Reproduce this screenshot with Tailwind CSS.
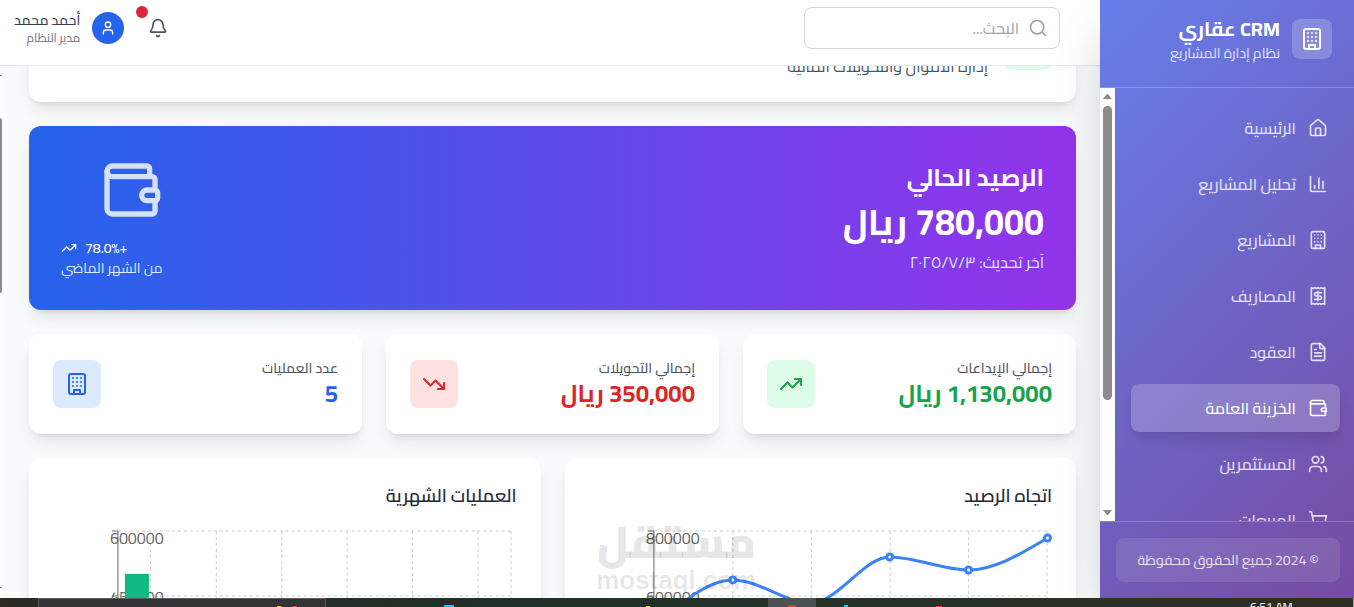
<!DOCTYPE html>
<html lang="ar" dir="rtl">
<head>
  <meta charset="UTF-8">
  <meta name="viewport" content="width=device-width, initial-scale=1.0">
  <title>عقاري CRM | الخزينة العامة</title>
  <script src="https://cdn.jsdelivr.net/npm/@tailwindcss/browser@4"></script>
</head>
<body class="h-screen flex flex-col overflow-hidden bg-[#f9fafb] font-['Cairo','Noto_Sans','DejaVu_Sans',sans-serif]">
  <!-- Shared icons -->
  <svg class="hidden" xmlns="http://www.w3.org/2000/svg">
    <symbol id="building" viewBox="0 0 24 24">
      <rect width="16" height="20" x="4" y="2" rx="2" />
      <path d="M9 22v-4h6v4M8 6h.01M16 6h.01M12 6h.01M12 10h.01M12 14h.01M16 10h.01M16 14h.01M8 10h.01M8 14h.01" />
    </symbol>
    <symbol id="wallet" viewBox="0 0 24 24">
      <path d="M19 7V4a1 1 0 0 0-1-1H5a2 2 0 0 0 0 4h15a1 1 0 0 1 1 1v4h-3a2 2 0 0 0 0 4h3a1 1 0 0 0 1-1v-2a1 1 0 0 0-1-1" />
      <path d="M3 5v14a2 2 0 0 0 2 2h15a1 1 0 0 0 1-1v-4" />
    </symbol>
    <symbol id="trend-up" viewBox="0 0 24 24">
      <path d="M22 7l-8.500 8.500-5-5L2 17M16 7h6v6" />
    </symbol>
    <symbol id="trend-down" viewBox="0 0 24 24">
      <path d="M22 17l-8.500-8.500-5 5L2 7M16 17h6v-6" />
    </symbol>
  </svg>

  <div class="flex-1 min-h-0 flex">
    <!-- Sidebar -->
    <aside class="relative z-20 w-[254px] shrink-0 flex flex-col shadow-2xl bg-[linear-gradient(135deg,#667eea_0%,#764ba2_100%)]">
      <div class="flex items-center gap-3 pt-[15px] pb-6 pr-[22px] pl-6 border-b border-white/20">
        <div class="size-10 flex items-center justify-center rounded-lg bg-white/20 text-white">
          <svg class="size-6 fill-none stroke-current stroke-2" stroke-linecap="round" stroke-linejoin="round"><use href="#building" /></svg>
        </div>
        <div class="whitespace-nowrap">
          <h1 class="text-xl leading-7 font-bold text-white">CRM عقاري</h1>
          <p class="text-sm leading-5 text-white/80">نظام إدارة المشاريع</p>
        </div>
      </div>

      <div class="flex-1 min-h-0 flex overflow-hidden">
        <nav class="flex-1 flex flex-col gap-2 py-4 pr-[14px] pl-4 text-base font-medium whitespace-nowrap text-white/80">
          <a href="#" class="h-12 shrink-0 flex items-center gap-3 px-3 rounded-lg">
            <svg class="size-5 fill-none stroke-current stroke-2" viewBox="0 0 24 24" stroke-linecap="round" stroke-linejoin="round"><path d="M15 21v-8a1 1 0 0 0-1-1h-4a1 1 0 0 0-1 1v8" /><path d="M3 10a2 2 0 0 1 .709-1.528l7-5.999a2 2 0 0 1 2.582 0l7 5.999A2 2 0 0 1 21 10v9a2 2 0 0 1-2 2H5a2 2 0 0 1-2-2z" /></svg>
            <span>الرئيسية</span>
          </a>
          <a href="#" class="h-12 shrink-0 flex items-center gap-3 px-3 rounded-lg">
            <svg class="size-5 fill-none stroke-current stroke-2" viewBox="0 0 24 24" stroke-linecap="round" stroke-linejoin="round"><path d="M3 3v16a2 2 0 0 0 2 2h16M18 17V9M13 17V5M8 17v-3" /></svg>
            <span>تحليل المشاريع</span>
          </a>
          <a href="#" class="h-12 shrink-0 flex items-center gap-3 px-3 rounded-lg">
            <svg class="size-5 fill-none stroke-current stroke-2" stroke-linecap="round" stroke-linejoin="round"><use href="#building" /></svg>
            <span>المشاريع</span>
          </a>
          <a href="#" class="h-12 shrink-0 flex items-center gap-3 px-3 rounded-lg">
            <svg class="size-5 fill-none stroke-current stroke-2" viewBox="0 0 24 24" stroke-linecap="round" stroke-linejoin="round"><path d="M4 2v20l2-1 2 1 2-1 2 1 2-1 2 1 2-1 2 1V2l-2 1-2-1-2 1-2-1-2 1-2-1-2 1Z" /><path d="M16 8h-6a2 2 0 1 0 0 4h4a2 2 0 1 1 0 4H8M12 17.500v-11" /></svg>
            <span>المصاريف</span>
          </a>
          <a href="#" class="h-12 shrink-0 flex items-center gap-3 px-3 rounded-lg">
            <svg class="size-5 fill-none stroke-current stroke-2" viewBox="0 0 24 24" stroke-linecap="round" stroke-linejoin="round"><path d="M15 2H6a2 2 0 0 0-2 2v16a2 2 0 0 0 2 2h12a2 2 0 0 0 2-2V7Z" /><path d="M14 2v4a2 2 0 0 0 2 2h4M10 9H8M16 13H8M16 17H8" /></svg>
            <span>العقود</span>
          </a>
          <a href="#" class="h-12 shrink-0 flex items-center gap-3 px-3 rounded-lg bg-white/20 shadow-lg text-white">
            <svg class="size-5 fill-none stroke-current stroke-2" stroke-linecap="round" stroke-linejoin="round"><use href="#wallet" /></svg>
            <span>الخزينة العامة</span>
          </a>
          <a href="#" class="h-12 shrink-0 flex items-center gap-3 px-3 rounded-lg">
            <svg class="size-5 fill-none stroke-current stroke-2" viewBox="0 0 24 24" stroke-linecap="round" stroke-linejoin="round"><path d="M16 21v-2a4 4 0 0 0-4-4H6a4 4 0 0 0-4 4v2" /><circle cx="9" cy="7" r="4" /><path d="M22 21v-2a4 4 0 0 0-3-3.870M16 3.130a4 4 0 0 1 0 7.750" /></svg>
            <span>المستثمرين</span>
          </a>
          <a href="#" class="h-12 shrink-0 flex items-center gap-3 px-3 rounded-lg">
            <svg class="size-5 fill-none stroke-current stroke-2" viewBox="0 0 24 24" stroke-linecap="round" stroke-linejoin="round"><circle cx="8" cy="21" r="1" /><circle cx="19" cy="21" r="1" /><path d="M2.050 2.050h2l2.660 12.420a2 2 0 0 0 2 1.580h9.780a2 2 0 0 0 1.950-1.570l1.650-7.430H5.120" /></svg>
            <span>المبيعات</span>
          </a>
        </nav>
        <!-- Scrollbar -->
        <div class="w-[15px] shrink-0 flex flex-col items-center pt-1.5 pb-1.5 bg-[#fcfcfc]">
          <svg class="w-[9px] h-[5px] fill-[#8b8b8b]" viewBox="0 0 9 5"><path d="M0 5L4 0h1l4 5z" /></svg>
          <div class="w-[9px] h-[294px] mt-[7px] rounded-full bg-[#8b8b8b]"></div>
          <svg class="w-[9px] h-[5px] mt-auto fill-[#8b8b8b]" viewBox="0 0 9 5"><path d="M0 0h9L5 5H4z" /></svg>
        </div>
      </div>

      <div class="pt-4 pb-4 pr-[14px] pl-4 border-t border-white/20">
        <p class="h-11 flex items-center justify-center rounded-lg bg-white/10 text-sm text-white/80 whitespace-nowrap">© 2024 جميع الحقوق محفوظة</p>
      </div>
    </aside>

    <div class="flex-1 min-w-0 flex flex-col">
      <!-- Header -->
      <header class="relative z-10 flex items-center justify-between pt-[7px] pb-4 pr-10 pl-[14px] bg-white border-b border-[#e5e7eb]">
        <div class="relative">
          <label for="search" class="sr-only">البحث</label>
          <svg class="absolute right-3 top-[11px] size-5 fill-none stroke-[#9ca3af] stroke-2" viewBox="0 0 24 24" stroke-linecap="round"><circle cx="11" cy="11" r="8" /><path d="m21 21-4.300-4.300" /></svg>
          <input type="text" id="search" placeholder="البحث..." class="w-64 h-[42px] pr-10 pl-4 rounded-lg border border-[#d1d5db] text-base placeholder:text-[#9ca3af] focus:outline-none focus:border-blue-500">
        </div>
        <div class="flex items-center gap-4">
          <button type="button" aria-label="الإشعارات" class="relative p-2 text-[#4b5563]">
            <svg class="size-5 fill-none stroke-current stroke-2" viewBox="0 0 24 24" stroke-linecap="round" stroke-linejoin="round"><path d="M10.268 21a2 2 0 0 0 3.464 0" /><path d="M3.262 15.326A1 1 0 0 0 4 17h16a1 1 0 0 0 .740-1.673C19.410 13.956 18 12.499 18 8A6 6 0 0 0 6 8c0 4.499-1.411 5.956-2.738 7.326" /></svg>
            <span class="absolute -top-1 -left-1 size-3 rounded-full bg-[#dc2638]"></span>
          </button>
          <div class="flex items-center gap-3">
            <div class="size-8 flex items-center justify-center rounded-full bg-[#2563eb] text-white">
              <svg class="size-4 fill-none stroke-current stroke-2" viewBox="0 0 24 24" stroke-linecap="round" stroke-linejoin="round"><path d="M19 21v-2a4 4 0 0 0-4-4H9a4 4 0 0 0-4 4v2" /><circle cx="12" cy="7" r="4" /></svg>
            </div>
            <div class="whitespace-nowrap">
              <p class="text-sm leading-5 font-medium text-[#374151]">أحمد محمد</p>
              <p class="text-xs leading-4 text-[#6b7280]">مدير النظام</p>
            </div>
          </div>
        </div>
      </header>

      <div class="flex-1 min-h-0 flex">
        <main class="flex-1 min-w-0 overflow-hidden px-6">
          <div class="-mt-[76px] flex flex-col gap-6">
            <section class="flex items-center gap-4 p-6 rounded-xl bg-white shadow-lg">
              <div class="size-12 flex items-center justify-center rounded-lg bg-[#dcfce7] text-[#16a34a]">
                <svg class="size-6 fill-none stroke-current stroke-2"><use href="#wallet" /></svg>
              </div>
              <div>
                <h2 class="mb-2 text-2xl leading-8 font-bold text-[#111827]">الخزينة العامة</h2>
                <p class="text-base leading-6 text-[#4b5563]">إدارة الأموال والتحويلات المالية</p>
              </div>
            </section>

            <!-- Balance -->
            <section class="flex items-center justify-between p-8 rounded-xl bg-[linear-gradient(to_right,#2563eb,#9333ea)] text-white shadow-lg">
              <div>
                <h3 class="mb-2 text-2xl leading-8 font-bold">الرصيد الحالي</h3>
                <p class="mb-2 text-4xl leading-10 font-bold">780,000 ريال</p>
                <p class="text-base leading-6 text-[#dbeafe]">آخر تحديث: ٣‏/٧‏/٢٠٢٥</p>
              </div>
              <div>
                <svg class="size-16 mb-4 fill-none stroke-[#d5e0fb] stroke-2" stroke-linecap="round" stroke-linejoin="round"><use href="#wallet" /></svg>
                <div class="text-sm leading-5">
                  <div class="flex items-center justify-end gap-2 font-medium">
                    <span dir="ltr">78.0%+</span>
                    <svg class="size-4 fill-none stroke-current stroke-2" stroke-linecap="round" stroke-linejoin="round"><use href="#trend-up" /></svg>
                  </div>
                  <p class="text-[#dbeafe] whitespace-nowrap">من الشهر الماضي</p>
                </div>
              </div>
            </section>

            <!-- Stats -->
            <section class="grid grid-cols-3 gap-6">
              <div class="flex items-center justify-between p-6 rounded-xl bg-white shadow-lg">
                <div>
                  <p class="text-sm leading-5 font-medium text-[#4b5563]">إجمالي الإيداعات</p>
                  <p class="text-2xl leading-8 font-bold text-[#16a34a]">1,130,000 ريال</p>
                </div>
                <div class="p-3 rounded-lg bg-[#dcfce7] text-[#16a34a]">
                  <svg class="size-6 fill-none stroke-current stroke-2" stroke-linecap="round" stroke-linejoin="round"><use href="#trend-up" /></svg>
                </div>
              </div>
              <div class="flex items-center justify-between p-6 rounded-xl bg-white shadow-lg">
                <div>
                  <p class="text-sm leading-5 font-medium text-[#4b5563]">إجمالي التحويلات</p>
                  <p class="text-2xl leading-8 font-bold text-[#dc2626]">350,000 ريال</p>
                </div>
                <div class="p-3 rounded-lg bg-[#fee2e2] text-[#dc2626]">
                  <svg class="size-6 fill-none stroke-current stroke-2" stroke-linecap="round" stroke-linejoin="round"><use href="#trend-down" /></svg>
                </div>
              </div>
              <div class="flex items-center justify-between p-6 rounded-xl bg-white shadow-lg">
                <div>
                  <p class="text-sm leading-5 font-medium text-[#4b5563]">عدد العمليات</p>
                  <p class="text-2xl leading-8 font-bold text-[#2563eb]">5</p>
                </div>
                <div class="p-3 rounded-lg bg-[#dbeafe] text-[#2563eb]">
                  <svg class="size-6 fill-none stroke-current stroke-2" stroke-linecap="round" stroke-linejoin="round"><use href="#building" /></svg>
                </div>
              </div>
            </section>

            <!-- Charts -->
            <section class="grid grid-cols-2 gap-6">
              <div class="relative p-6 rounded-xl bg-white shadow-lg">
                <h3 class="mb-4 text-lg leading-7 font-semibold text-[#1f2937]">اتجاه الرصيد</h3>
                <svg class="w-full" viewBox="0 0 464 300" direction="ltr">
                  <g fill="none" stroke="#ccc" stroke-dasharray="3 3">
                    <path d="M65 5H459M65 70H459M144 5V265M222.500 5V265M301.500 5V265M380 5V265M458.500 5V265" />
                  </g>
                  <path d="M65 5V265M59 5h6M59 70h6" fill="none" stroke="#666" />
                  <g fill="#666" font-size="16">
                    <text x="57" y="18">800000</text>
                    <text x="57" y="77">600000</text>
                  </g>
                  <path d="M65 103C91 78 118 54 144 54C170 54 196 77 222 77C249 77 275 31 301 31C327 31 354 44 380 44C406 44 432 28 459 12" fill="none" stroke="#3b82f6" stroke-width="3" />
                  <g fill="#fff" stroke="#3b82f6" stroke-width="3">
                    <circle cx="144" cy="54" r="3" />
                    <circle cx="222" cy="77" r="3" />
                    <circle cx="301" cy="31" r="3" />
                    <circle cx="380" cy="44" r="3" />
                    <circle cx="459" cy="12" r="3" />
                  </g>
                </svg>
                <!-- Watermark -->
                <div class="absolute left-8 top-[58px] w-[160px] text-center font-bold whitespace-nowrap text-black/10">
                  <p class="text-[44px] leading-[52px] font-black">مستقل</p>
                  <p class="font-['Liberation_Sans',sans-serif] text-[26px] leading-6">mostaql.com</p>
                </div>
              </div>
              <div class="p-6 rounded-xl bg-white shadow-lg">
                <h3 class="mb-4 text-lg leading-7 font-semibold text-[#1f2937]">العمليات الشهرية</h3>
                <svg class="w-full" viewBox="0 0 464 300" direction="ltr">
                  <g fill="none" stroke="#ccc" stroke-dasharray="3 3">
                    <path d="M65 5H459M65 70H459M97.500 5V265M163.500 5V265M229 5V265M294.500 5V265M360 5V265M425.500 5V265M458.500 5V265" />
                  </g>
                  <path d="M65 5V265M59 5h6M59 70h6" fill="none" stroke="#666" />
                  <g fill="#666" font-size="16">
                    <text x="57" y="18">600000</text>
                    <text x="57" y="77">450000</text>
                  </g>
                  <rect x="72" y="48" width="24" height="217" fill="#10b981" />
                </svg>
              </div>
            </section>
          </div>
        </main>
        <!-- Page scrollbar -->
        <div class="w-[5px] shrink-0 flex flex-col items-end pt-[9px] pb-[10px] bg-[#fcfcfc]">
          <span class="w-0.5 h-px bg-[#8b8b8b]"></span>
          <span class="w-0.5 h-[175px] mt-[42px] rounded-r-sm bg-[#8b8b8b]"></span>
          <span class="w-0.5 h-px mt-auto bg-[#8b8b8b]"></span>
        </div>
      </div>
    </div>
  </div>

  <!-- Taskbar -->
  <footer dir="ltr" class="relative z-30 h-[9px] shrink-0 flex overflow-hidden bg-[linear-gradient(to_right,#2c2a22_0%,#1f3028_36%,#24332a_56%,#2f2e22_100%)] text-xs text-white">
    <div class="w-[38px] shrink-0"></div>
    <div class="w-[288px] shrink-0 flex items-end justify-end gap-3 pr-7 border border-b-0 border-[#5c5c5e] bg-[#333335]">
      <span class="w-1 h-px bg-amber-400"></span>
      <span class="w-1 h-px bg-red-500"></span>
    </div>
    <div class="w-[442px] shrink-0 flex items-end justify-between pl-[118px] pr-[118px]">
      <span class="w-2.5 h-0.5 bg-cyan-400"></span>
      <span class="w-1 h-px bg-yellow-500"></span>
    </div>
    <div class="w-12 shrink-0 flex items-end justify-center bg-[#4b5254]"><span class="w-2 h-0.5 bg-red-500"></span></div>
    <div class="flex-1 flex items-end gap-[88px] pl-7"><span class="w-1 h-0.5 bg-cyan-400"></span><span class="w-1.5 h-px bg-red-500"></span></div>
    <div class="w-[104px] shrink-0 pt-px leading-4 border-r border-gray-400">6:51 AM</div>
  </footer>
</body>
</html>
